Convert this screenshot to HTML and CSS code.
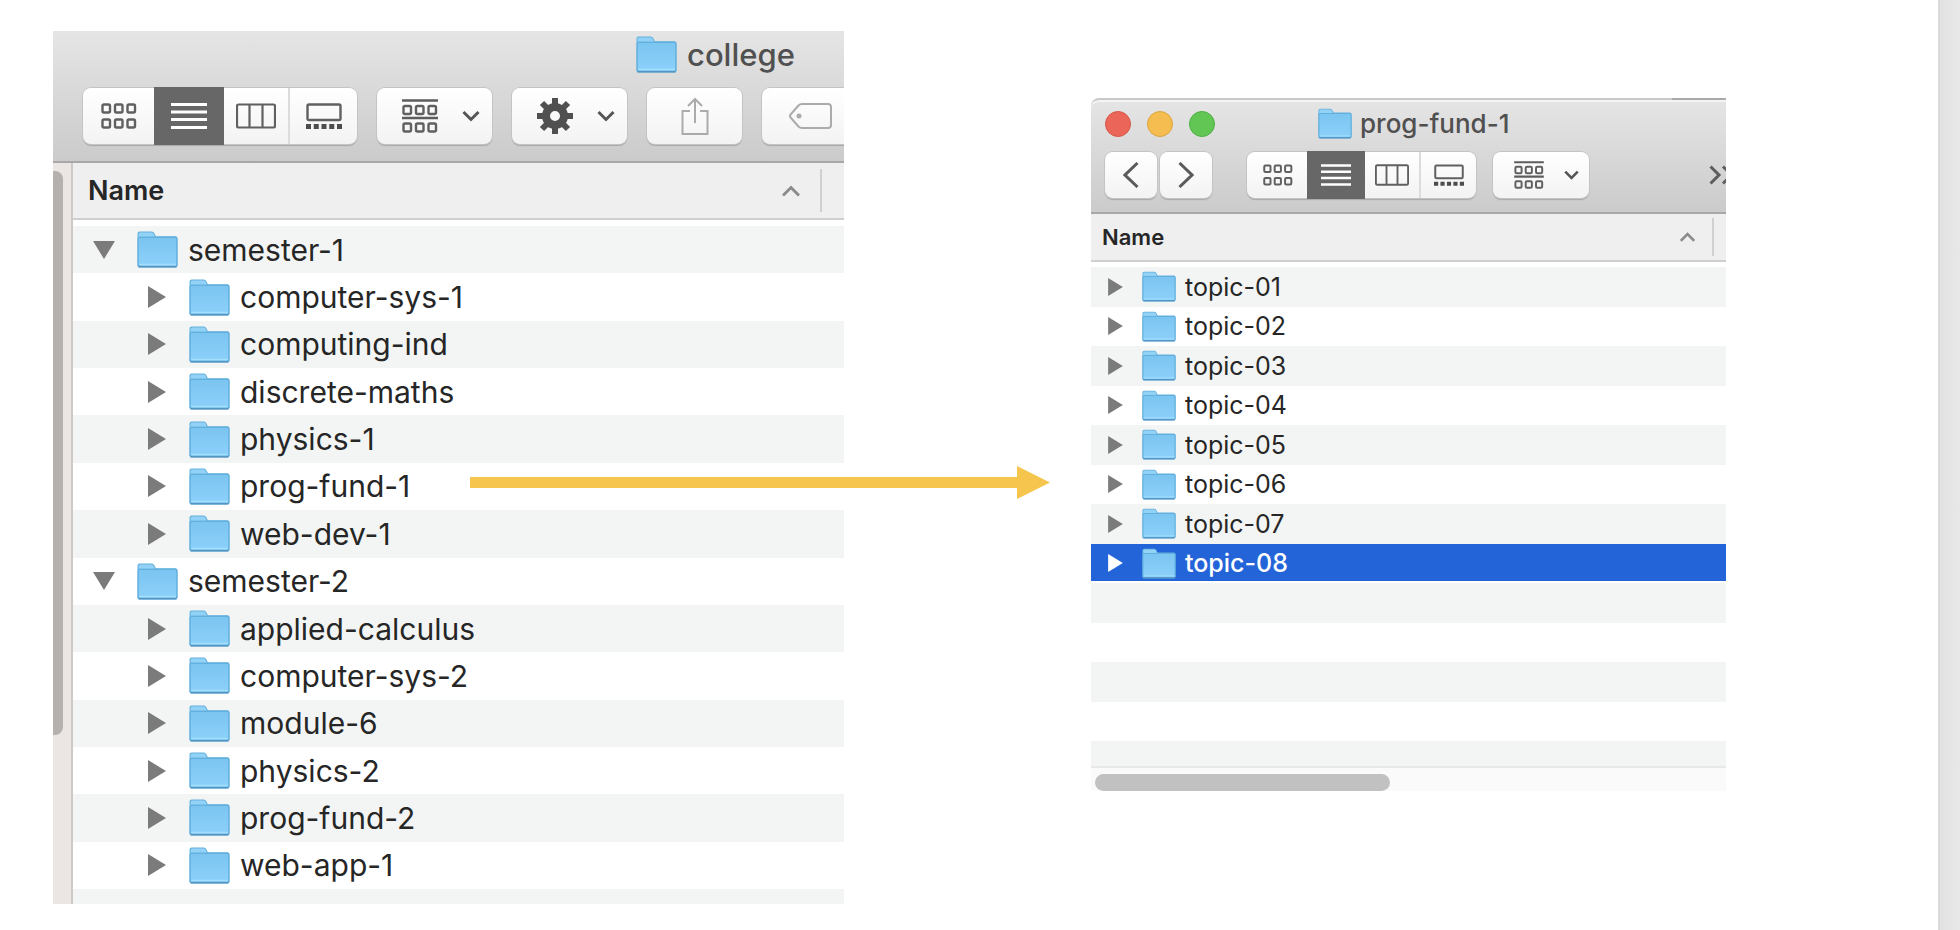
FILE: index.html
```html
<!DOCTYPE html>
<html lang="en">
<head>
<meta charset="utf-8">
<title>Folder structure</title>
<link rel="stylesheet" href="styles.css">
</head>
<body>
<svg class="defs" aria-hidden="true">
  <defs>
    <linearGradient id="folder-fill" x1="0" y1="0" x2="0" y2="1">
      <stop offset="0" stop-color="#7cc5f1"/><stop offset="1" stop-color="#8bd0fa"/>
    </linearGradient>
    <symbol id="folder" viewBox="0 0 40 36">
      <path d="M.5 34V2.500Q.5.500 2.500.500h12q1.500 0 2.300 1.500l1.600 3H37.500q2 0 2 2V34z" fill="#64b0dd"/>
      <path d="M1.500 5.500V3Q1.500 1.500 3 1.500h11q1.500 0 2 1l1.500 3z" fill="#92d2f6"/>
      <rect x=".5" y="5.500" width="39" height="30" rx="2" fill="#62b0de"/>
      <rect x="1.750" y="6.750" width="36.500" height="27" rx="1" fill="url(#folder-fill)"/>
      <path d="M2 32.500h36" stroke="#a5dffc"/>
      <path d="M1.500 34.750h37" stroke="#5595c2" stroke-width="1.500"/>
    </symbol>
    <symbol id="grid" viewBox="0 0 36 26">
      <g fill="none" stroke="#606060" stroke-width="2.400"><rect x="1.500" y="1.500" width="7.500" height="8" rx="1.500"/><rect x="14" y="1.500" width="7.500" height="8" rx="1.500"/><rect x="26.500" y="1.500" width="7.500" height="8" rx="1.500"/><rect x="1.500" y="16.500" width="7.500" height="8" rx="1.500"/><rect x="14" y="16.500" width="7.500" height="8" rx="1.500"/><rect x="26.500" y="16.500" width="7.500" height="8" rx="1.500"/></g>
    </symbol>
    <symbol id="lines" viewBox="0 0 36 26">
      <path d="M0 1.500h36M0 9h36M0 16.500h36M0 24.500h36" stroke="#fff" stroke-width="3"/>
    </symbol>
    <symbol id="columns" viewBox="0 0 40 26">
      <path d="M2.500 1.500h35q1.500 0 1.500 1.500v20q0 1.500-1.500 1.500h-35Q1 24.500 1 23V3q0-1.500 1.500-1.500zM13.500 2v22M26.500 2v22" fill="none" stroke="#606060" stroke-width="2.200"/>
    </symbol>
    <symbol id="gallery" viewBox="0 0 36 26">
      <rect x="1.500" y="1.500" width="33" height="15.500" rx="1.500" fill="none" stroke="#606060" stroke-width="2.400"/>
      <path d="M0 23.500h36" stroke="#4d4d4d" stroke-width="5" stroke-dasharray="5 2.750"/>
    </symbol>
    <symbol id="group" viewBox="0 0 36 34">
      <path d="M0 1.500h36M0 19h36" stroke="#5d5d5d" stroke-width="2.500"/>
      <g fill="none" stroke="#606060" stroke-width="2.400"><rect x="1.500" y="7" width="7.500" height="8" rx="1.500"/><rect x="14" y="7" width="7.500" height="8" rx="1.500"/><rect x="26.500" y="7" width="7.500" height="8" rx="1.500"/><rect x="1.500" y="24.500" width="7.500" height="8" rx="1.500"/><rect x="14" y="24.500" width="7.500" height="8" rx="1.500"/><rect x="26.500" y="24.500" width="7.500" height="8" rx="1.500"/></g>
    </symbol>
    <symbol id="down" viewBox="0 0 18 12">
      <path d="M1.500 2 9 9.500 16.500 2" fill="none" stroke="#555" stroke-width="3"/>
    </symbol>
    <symbol id="up" viewBox="0 0 18 12">
      <path d="M1 10.500 9 2.500l8 8" fill="none" stroke="#8b8b8b" stroke-width="3"/>
    </symbol>
    <symbol id="gear" viewBox="-18 -18 36 36">
      <circle r="9" fill="none" stroke="#505050" stroke-width="8"/>
      <g stroke="#505050" stroke-width="6"><path d="M0-11v-7M0 11v7M-11 0h-7M11 0h7"/><path d="M8-8l5-5M-8 8l-5 5M-8-8l-5-5M8 8l5 5"/></g>
    </symbol>
    <symbol id="share" viewBox="0 0 28 38">
      <path d="M9 14H1.500v23h25V14H19M14 26V2M7 9l7-7 7 7" fill="none" stroke="#ababab" stroke-width="2"/>
    </symbol>
    <symbol id="tag" viewBox="0 0 44 26">
      <path d="M13 1h26q3 0 3 3v18q0 3-3 3H13q-2 0-3.500-1.500L2 15q-2-2 0-4l7.500-8.500Q11 1 13 1z" fill="none" stroke="#ababab" stroke-width="2"/>
      <circle cx="10" cy="13" r="2.500" fill="#ababab"/>
    </symbol>
    <symbol id="back" viewBox="0 0 16 26"><path d="M14.500 1 2 13l12.500 12" fill="none" stroke="#5a5a5a" stroke-width="3"/></symbol>
    <symbol id="forward" viewBox="0 0 16 26"><path d="M1.500 1 14 13 1.500 25" fill="none" stroke="#5a5a5a" stroke-width="3"/></symbol>
    <symbol id="more" viewBox="0 0 26 20"><path d="M1.500 1.500 10 10l-8.500 8.500M14 1.500l8.500 8.500-8.500 8.500" fill="none" stroke="#5d5d5d" stroke-width="3"/></symbol>
    <symbol id="closed" viewBox="0 0 18 22"><path d="M0 0v22l18-11z" fill="currentColor"/></symbol>
    <symbol id="open" viewBox="0 0 22 18"><path d="M0 0h22L11 18z" fill="currentColor"/></symbol>
  </defs>
</svg>

<main class="stage">
  <section class="window college" aria-label="college">
    <header class="chrome">
      <h1 class="title"><svg class="folder"><use href="#folder"/></svg>college</h1>
      <div class="tools">
        <div class="segments">
          <button aria-label="Icons"><svg class="i-grid"><use href="#grid"/></svg></button>
          <button class="on" aria-label="List"><svg class="i-grid"><use href="#lines"/></svg></button>
          <button aria-label="Columns"><svg class="i-columns"><use href="#columns"/></svg></button>
          <button aria-label="Gallery"><svg class="i-grid"><use href="#gallery"/></svg></button>
        </div>
        <button class="tool menu" aria-label="Group"><svg class="i-group"><use href="#group"/></svg><svg class="i-chevron"><use href="#down"/></svg></button>
        <button class="tool menu" aria-label="Actions"><svg class="i-gear"><use href="#gear"/></svg><svg class="i-chevron"><use href="#down"/></svg></button>
        <button class="tool share" aria-label="Share"><svg class="i-share"><use href="#share"/></svg></button>
        <button class="tool tag" aria-label="Tags"><svg class="i-tag"><use href="#tag"/></svg></button>
      </div>
    </header>
    <div class="body">
      <div class="sidebar"><div class="thumb"></div></div>
      <div class="pane">
        <div class="heading"><span>Name</span><svg class="i-chevron"><use href="#up"/></svg></div>
        <ul class="rows">
          <li><svg class="open"><use href="#open"/></svg><svg class="folder"><use href="#folder"/></svg>semester-1</li>
          <li class="child"><svg class="closed"><use href="#closed"/></svg><svg class="folder"><use href="#folder"/></svg>computer-sys-1</li>
          <li class="child"><svg class="closed"><use href="#closed"/></svg><svg class="folder"><use href="#folder"/></svg>computing-ind</li>
          <li class="child"><svg class="closed"><use href="#closed"/></svg><svg class="folder"><use href="#folder"/></svg>discrete-maths</li>
          <li class="child"><svg class="closed"><use href="#closed"/></svg><svg class="folder"><use href="#folder"/></svg>physics-1</li>
          <li class="child"><svg class="closed"><use href="#closed"/></svg><svg class="folder"><use href="#folder"/></svg>prog-fund-1</li>
          <li class="child"><svg class="closed"><use href="#closed"/></svg><svg class="folder"><use href="#folder"/></svg>web-dev-1</li>
          <li><svg class="open"><use href="#open"/></svg><svg class="folder"><use href="#folder"/></svg>semester-2</li>
          <li class="child"><svg class="closed"><use href="#closed"/></svg><svg class="folder"><use href="#folder"/></svg>applied-calculus</li>
          <li class="child"><svg class="closed"><use href="#closed"/></svg><svg class="folder"><use href="#folder"/></svg>computer-sys-2</li>
          <li class="child"><svg class="closed"><use href="#closed"/></svg><svg class="folder"><use href="#folder"/></svg>module-6</li>
          <li class="child"><svg class="closed"><use href="#closed"/></svg><svg class="folder"><use href="#folder"/></svg>physics-2</li>
          <li class="child"><svg class="closed"><use href="#closed"/></svg><svg class="folder"><use href="#folder"/></svg>prog-fund-2</li>
          <li class="child"><svg class="closed"><use href="#closed"/></svg><svg class="folder"><use href="#folder"/></svg>web-app-1</li>
          <li></li>
        </ul>
      </div>
    </div>
  </section>

  <section class="window prog" aria-label="prog-fund-1">
    <header class="chrome">
      <div class="titlebar">
        <div class="lights"><button class="close" aria-label="Close"></button><button class="minimise" aria-label="Minimise"></button><button class="zoom" aria-label="Zoom"></button></div>
        <h1 class="title"><svg class="folder"><use href="#folder"/></svg>prog-fund-1</h1>
      </div>
      <div class="tools">
        <div class="nav">
          <button class="tool" aria-label="Back"><svg class="i-nav"><use href="#back"/></svg></button>
          <button class="tool" aria-label="Forward"><svg class="i-nav"><use href="#forward"/></svg></button>
        </div>
        <div class="segments">
          <button aria-label="Icons"><svg class="i-grid"><use href="#grid"/></svg></button>
          <button class="on" aria-label="List"><svg class="i-grid"><use href="#lines"/></svg></button>
          <button aria-label="Columns"><svg class="i-columns"><use href="#columns"/></svg></button>
          <button aria-label="Gallery"><svg class="i-grid"><use href="#gallery"/></svg></button>
        </div>
        <button class="tool menu" aria-label="Group"><svg class="i-group"><use href="#group"/></svg><svg class="i-chevron"><use href="#down"/></svg></button>
        <button class="more" aria-label="More"><svg class="i-more"><use href="#more"/></svg></button>
      </div>
    </header>
    <div class="pane">
      <div class="heading"><span>Name</span><svg class="i-chevron"><use href="#up"/></svg></div>
      <ul class="rows">
        <li><svg class="closed"><use href="#closed"/></svg><svg class="folder"><use href="#folder"/></svg>topic-01</li>
        <li><svg class="closed"><use href="#closed"/></svg><svg class="folder"><use href="#folder"/></svg>topic-02</li>
        <li><svg class="closed"><use href="#closed"/></svg><svg class="folder"><use href="#folder"/></svg>topic-03</li>
        <li><svg class="closed"><use href="#closed"/></svg><svg class="folder"><use href="#folder"/></svg>topic-04</li>
        <li><svg class="closed"><use href="#closed"/></svg><svg class="folder"><use href="#folder"/></svg>topic-05</li>
        <li><svg class="closed"><use href="#closed"/></svg><svg class="folder"><use href="#folder"/></svg>topic-06</li>
        <li><svg class="closed"><use href="#closed"/></svg><svg class="folder"><use href="#folder"/></svg>topic-07</li>
        <li class="selected"><svg class="closed"><use href="#closed"/></svg><svg class="folder"><use href="#folder"/></svg>topic-08</li>
        <li></li><li></li><li></li><li></li><li></li>
      </ul>
      <div class="scroll"><div class="thumb"></div></div>
    </div>
  </section>
  <div class="arrow"><span class="shaft"></span><span class="head"></span></div>
</main>
</body>
</html>
```
FILE: styles.css
```css
* { box-sizing: border-box; }
html, body { height: 100%; }
body {
  margin: 0;
  display: flex;
  background: linear-gradient(to left, #e8e8e8, #e2e2e2 20px);
  font-family: Inter, "Liberation Sans", sans-serif;
  color: #262626;
}
button { padding: 0; border: 0; background: none; display: flex; align-items: center; justify-content: center; }
svg { display: block; flex: none; }
.defs { position: absolute; width: 0; height: 0; }

.stage {
  position: relative;
  flex: 1;
  margin-right: 20px;
  padding: 31px 212px 26px 53px;
  border-right: 2px solid #dadada;
  background: #fff;
  display: grid;
  grid-template-columns: 791fr 635fr;
  column-gap: 247px;
  min-height: 100%;
}
.window { display: flex; flex-direction: column; overflow: hidden; min-width: 0; }
.chrome {
  flex: none;
  background: linear-gradient(#e5e5e5, #cbcbcb);
  border-bottom: 2px solid #a8a8a8;
}
.title {
  margin: 0;
  display: flex;
  align-items: center;
  font-weight: 500;
  color: #505050;
}
.tools { display: flex; align-items: center; }
.tool, .segments {
  flex: none;
  background: linear-gradient(#fff, #f3f3f3);
  border-radius: 8px;
  box-shadow: 0 0 0 1px #c4c4c4, 0 2px 1px #a9a9a9;
}
.segments { display: grid; }
.segments button { border-left: 2px solid #dcdcdc; }
.segments button:first-child, .segments .on, .segments .on + button { border-left: 0; }
.segments .on { background: #676767; box-shadow: 0 0 0 1px #676767; }
.pane { flex: 1; display: flex; flex-direction: column; min-width: 0; background: #fff; }
.heading {
  flex: none;
  display: flex;
  align-items: center;
  justify-content: space-between;
  background: #efefef;
  border-bottom: 2px solid #cfcfcf;
  font-weight: 600;
}
.heading::after { content: ""; width: 2px; align-self: stretch; background: #d0d0d0; }
.heading span { flex: 1; }
.rows { flex: 1; margin: 0; padding: 0; list-style: none; display: grid; }
.rows li { display: flex; align-items: center; min-height: 0; white-space: nowrap; }
.rows li:nth-child(odd) { background: #f3f5f4; }
.closed, .open { color: #7b7b7b; }

.college .chrome { height: 132px; }
.college .title { height: 46px; padding-left: 583px; font-size: 31px; gap: 10px; }
.college .folder { width: 41px; height: 37px; }
.college .tools { gap: 20px; padding: 11px 0 0 30px; }
.college .tool, .college .segments { height: 56px; }
.college .segments { width: 274px; grid-template-columns: 72fr 68fr 65fr 69fr; }
.college .menu { width: 115px; justify-content: space-between; padding: 0 12px 0 25px; }
.college .share { width: 95px; }
.college .tag { width: 115px; padding-right: 17px; }
.college .i-grid { width: 36px; height: 26px; }
.college .i-columns { width: 40px; height: 26px; }
.college .i-group { width: 36px; height: 34px; }
.college .i-gear { width: 36px; height: 36px; }
.college .i-share { width: 28px; height: 38px; }
.college .i-tag { width: 44px; height: 26px; }
.college .i-chevron { width: 18px; height: 12px; }
.body { flex: 1; display: flex; }
.sidebar { width: 20px; padding-top: 8px; background: #ebe6e3; border-right: 2px solid #cfc9c6; }
.sidebar .thumb { width: 10px; height: 77%; background: #b5b1ae; border-radius: 0 8px 8px 0; }
.college .heading { height: 57px; padding: 6px 22px 6px 15px; font-size: 27px; gap: 20px; }
.college .rows { padding-top: 6px; font-size: 30px; grid-template-rows: repeat(14, 1fr) 15px; }
.college .rows li { padding-left: 20px; gap: 10px; }
.college .rows li.child { padding-left: 75px; }
.college .open { width: 22px; height: 18px; margin-right: 12px; }
.college .closed { width: 18px; height: 22px; margin-right: 13px; }

.prog { margin: 67px 0 113px; }
.prog .chrome {
  position: relative;
  height: 116px;
  border-top: 2px solid #c9c9c9;
  border-top-left-radius: 8px;
  box-shadow: inset 0 2px 0 #f4f4f4;
}
.prog .chrome::after {
  content: "";
  position: absolute;
  top: -2px;
  right: 0;
  width: 54px;
  height: 2px;
  background: #a9a9a9;
}
.titlebar { display: flex; align-items: center; height: 47px; padding-left: 14px; gap: 103px; }
.lights { display: flex; gap: 16px; }
.lights button { width: 26px; height: 26px; border-radius: 50%; }
.lights .close { background: #ec6559; border: 1px solid #d65549; }
.lights .minimise { background: #f5bd4f; border: 1px solid #dba53c; }
.lights .zoom { background: #62c654; border: 1px solid #4dae41; }
.prog .title { font-size: 26px; gap: 8px; }
.prog .folder { width: 34px; height: 31px; }
.prog .tools { padding: 5px 0 0 14px; }
.prog .tool, .prog .segments { height: 46px; }
.nav { display: flex; gap: 3px; margin-right: 35px; }
.nav .tool { width: 52px; }
.prog .segments { width: 229px; margin-right: 17px; grid-template-columns: 61fr 56fr 55fr 57fr; }
.prog .menu { width: 96px; justify-content: space-between; padding: 0 10px 0 21px; }
.more { margin-left: auto; width: 17px; justify-content: flex-start; overflow: hidden; }
.prog .i-nav { width: 16px; height: 26px; }
.prog .i-grid { width: 30px; height: 22px; }
.prog .i-columns { width: 34px; height: 22px; }
.prog .i-group { width: 30px; height: 28px; }
.prog .i-chevron { width: 15px; height: 10px; }
.prog .i-more { width: 26px; height: 20px; }
.prog .heading { height: 48px; padding: 4px 12px 4px 11px; font-size: 22px; gap: 17px; }
.prog .rows { padding-top: 5px; font-size: 25px; grid-template-rows: repeat(12, 1fr) 25px; }
.prog .rows li { padding-left: 17px; gap: 9px; }
.prog .closed { width: 15px; height: 18px; margin-right: 10px; }
.prog .rows .selected { background: #2364d9; color: #fff; margin-bottom: 2px; padding-top: 2px; font-weight: 500; }
.selected .closed { color: #fff; }
.scroll { height: 25px; padding: 6px 4px 0; background: #fafafa; border-top: 2px solid #e8e8e8; }
.scroll .thumb { width: 47%; height: 17px; border-radius: 9px; background: #c1c1c1; }

.arrow { position: absolute; left: 470px; right: 888px; top: 466px; height: 33px; display: flex; align-items: center; }
.shaft { flex: 1; height: 11px; background: #f5c54e; }
.head { width: 33px; height: 33px; background: #f5c54e; clip-path: polygon(0 0, 100% 50%, 0 100%); }
```
